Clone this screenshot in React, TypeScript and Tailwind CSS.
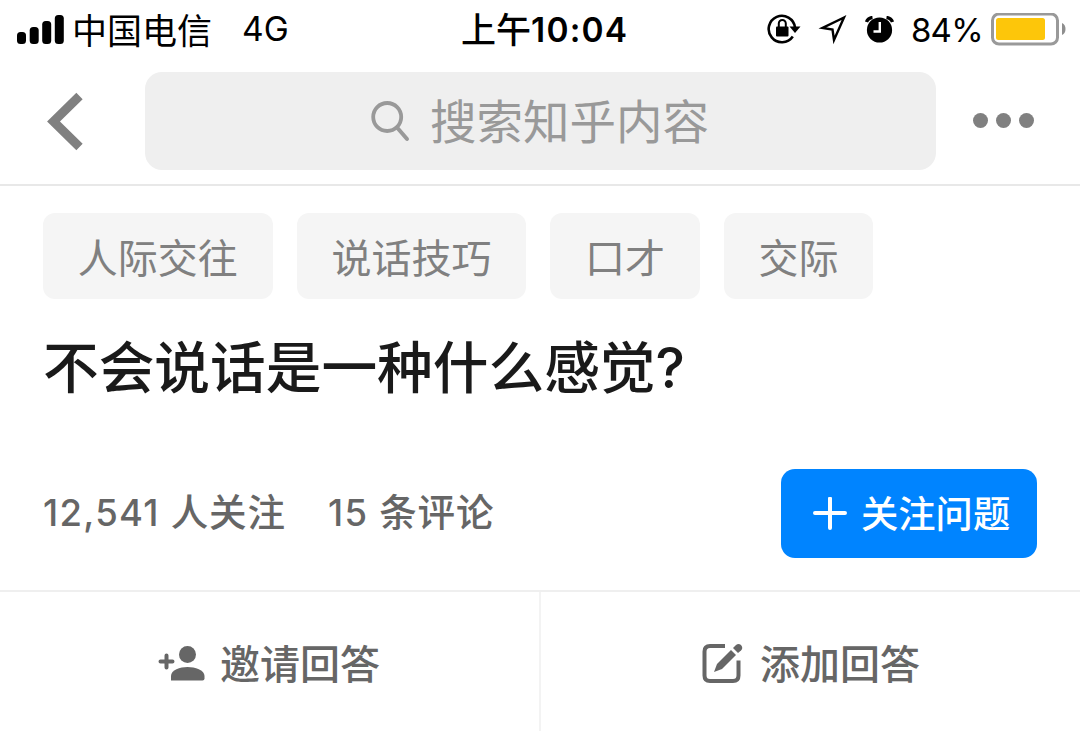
import React from "react";

const TOPICS = ["人际交往", "说话技巧", "口才", "交际"];

const StatusBar: React.FC = () => (
  <div className="flex h-[60px] items-center text-black leading-none">
    <div className="flex w-[461px] items-center pl-[17px]">
      <svg width="47" height="30" viewBox="0 0 47 30">
        <rect x="0" y="17" width="9" height="12" rx="3.5" />
        <rect x="12.7" y="12" width="9" height="17" rx="3.5" />
        <rect x="25.2" y="6" width="9" height="23" rx="3.5" />
        <rect x="37.8" y="0" width="9" height="29" rx="3.5" />
      </svg>
      <span className="ml-[8px] pt-[2px] text-[35px]">中国电信</span>
      <span className="ml-[30px] text-[33.5px]">4G</span>
    </div>
    <div className="flex w-[306px] items-center pt-[1px] font-medium">
      <span className="text-[35px]">上午</span>
      <span className="text-[33.5px] font-semibold tracking-[1.2px]">10:04</span>
    </div>
    <svg width="34" height="32" viewBox="0 0 34 32" fill="none" stroke="#000" strokeWidth="2.6">
      <path d="M25.8 22.5 A13.2 13.2 0 1 1 28 13.5" />
      <path d="M22.5 12.5 H33.5 L28 19 Z" fill="#000" stroke="none" />
      <rect x="9" y="12.5" width="12.5" height="10" rx="1" fill="#000" stroke="none" />
      <path d="M11.8 13 V9.5 a3.5 3.5 0 0 1 7 0 V13" strokeWidth="2" />
    </svg>
    <svg className="ml-[17px]" width="30" height="30" viewBox="0 0 30 30" fill="none" stroke="#000" strokeWidth="2.4">
      <path d="M26 2.5 L4.500 13 L14.5 14.5 L16 25 Z" strokeLinejoin="miter" />
    </svg>
    <svg className="ml-[17px]" width="29" height="29" viewBox="0 0 29 29">
      <circle cx="14.5" cy="14" r="12.6" />
      <path d="M1.5 6 Q3 2 7.5 1.5" fill="none" stroke="#000" strokeWidth="3.4" />
      <path d="M27.5 6 Q26 2 21.5 1.5" fill="none" stroke="#000" strokeWidth="3.4" />
      <path d="M14.8 6 V15.5 H8.5" fill="none" stroke="#fff" strokeWidth="2.4" />
    </svg>
    <span className="ml-[17px] w-[71px] pt-[1px] text-[33px] tracking-[-0.8px] whitespace-nowrap">84%</span>
    <svg className="ml-[9px]" width="76" height="34" viewBox="0 0 76 34">
      <rect x="1.5" y="1" width="65" height="30" rx="6.5" fill="#fff" stroke="#999" strokeWidth="3" />
      <rect x="5" y="5" width="49" height="22" rx="2.5" fill="#fdc60a" />
      <path d="M71 10 Q74.5 11.5 74.5 16 Q74.5 20.5 71 22 Z" fill="#8e8e8e" />
    </svg>
  </div>
);

const SearchHeader: React.FC = () => (
  <div className="flex h-[126px] items-start border-b-2 border-[#e8e8e8] pt-[12px]">
    <svg className="mt-[20px] ml-[46px]" width="38" height="60" viewBox="0 0 38 60" fill="none" stroke="#808080" strokeWidth="9">
      <path d="M33.5 4 L7.5 29.5 L33.5 55" />
    </svg>
    <div className="ml-[61px] flex h-[98px] w-[791px] items-center rounded-[17px] bg-[#efefef] pl-[226px] text-[#999]">
      <svg width="40" height="42" viewBox="0 0 40 42" fill="none" stroke="#999" strokeLinecap="round">
        <circle cx="16.2" cy="17" r="14" strokeWidth="3.8" />
        <path d="M26.5 28 L36 39" strokeWidth="4" />
      </svg>
      <span className="ml-[19px] pt-[2px] text-[46.5px] leading-none">搜索知乎内容</span>
    </div>
    <div className="mt-[41px] ml-[37px] flex gap-[8.5px]">
      <i className="size-[14.5px] rounded-full bg-[#808080]" />
      <i className="size-[14.5px] rounded-full bg-[#808080]" />
      <i className="size-[14.5px] rounded-full bg-[#808080]" />
    </div>
  </div>
);

const Question: React.FC = () => (
  <div className="h-[406px] border-b-2 border-[#efefef] px-[43px] pt-[27px]">
    <div className="flex gap-[24px]">
      {TOPICS.map((topic) => (
        <span
          key={topic}
          className="flex h-[86px] items-center rounded-[12px] bg-[#f5f5f5] px-[34.8px] pt-[5px] text-[40px] leading-none text-[#808080]"
        >
          {topic}
        </span>
      ))}
    </div>
    <h1 className="mt-[39px] text-[55.7px] leading-[60px] font-medium whitespace-nowrap text-[#1a1a1a]">
      不会说话是一种什么感觉?
    </h1>
    <div className="mt-[71px] flex items-center text-[37.5px] leading-none text-[#666]">
      <span className="w-[285px] pb-[2px] font-medium tracking-[0.9px] whitespace-nowrap">
        <span className="text-[36.5px] tracking-[1.3px]">12,541</span> 人关注
      </span>
      <span className="pb-[2px] font-medium tracking-[0.9px] whitespace-nowrap">
        <span className="text-[36.5px] tracking-[1.3px]">15</span> 条评论
      </span>
      <button className="ml-auto flex h-[89px] w-[256px] items-center rounded-[14px] bg-[#0084ff] pl-[32px] text-[37.3px] leading-none font-medium text-white">
        <svg width="34" height="34" viewBox="0 0 34 34" stroke="#fff" strokeWidth="4" strokeLinecap="round">
          <path d="M2 16 H32 M17 1.5 V31" />
        </svg>
        <span className="ml-[14px] pt-[2px] whitespace-nowrap">关注问题</span>
      </button>
    </div>
  </div>
);

const Actions: React.FC = () => (
  <div className="flex h-[139px] text-[40px] leading-none font-medium text-[#666]">
    <div className="flex w-[541px] items-center border-r-2 border-[#f3f3f3] pt-[4px] pl-[158px]">
      <svg width="48" height="36" viewBox="0 0 48 36" fill="#666">
        <circle cx="29.5" cy="8.5" r="8.5" />
        <path d="M13 34.5 V30 C13 24 22 21 29.5 21 C37 21 46.500 24 46.5 30 V32.5 Q46.5 34.5 44.5 34.5 Z" />
        <path d="M2.5 15.500 H14.5 M8.5 9.5 V21.5" stroke="#666" strokeWidth="4" strokeLinecap="round" />
      </svg>
      <span className="ml-[14px] pt-[2px]">邀请回答</span>
    </div>
    <div className="flex flex-1 items-center pt-[4px] pl-[161px]">
      <svg width="42" height="42" viewBox="0 0 42 42" fill="none" stroke="#666" strokeWidth="4">
        <path d="M23 3 H8 Q2.5 3 2.5 8.5 V32.5 Q2.5 38 8 38 H31 Q36.5 38 36.5 32.5 V17.5" />
        <path d="M12 29 L15 21 L29 7 L34 12 L20 26 Z" fill="#666" stroke="none" />
        <path d="M31 5 L34 2 Q36.5 0 39 2 Q41.5 5 39 7.5 L36 10 Z" fill="#666" stroke="none" />
      </svg>
      <span className="ml-[16px] pt-[2px]">添加回答</span>
    </div>
  </div>
);

const App: React.FC = () => {
  return (
    <div className="h-[731px] w-[1080px] overflow-hidden bg-white font-[Inter,'Noto_Sans_CJK_SC',sans-serif]">
      <StatusBar />
      <SearchHeader />
      <Question />
      <Actions />
    </div>
  );
};

export default App;
